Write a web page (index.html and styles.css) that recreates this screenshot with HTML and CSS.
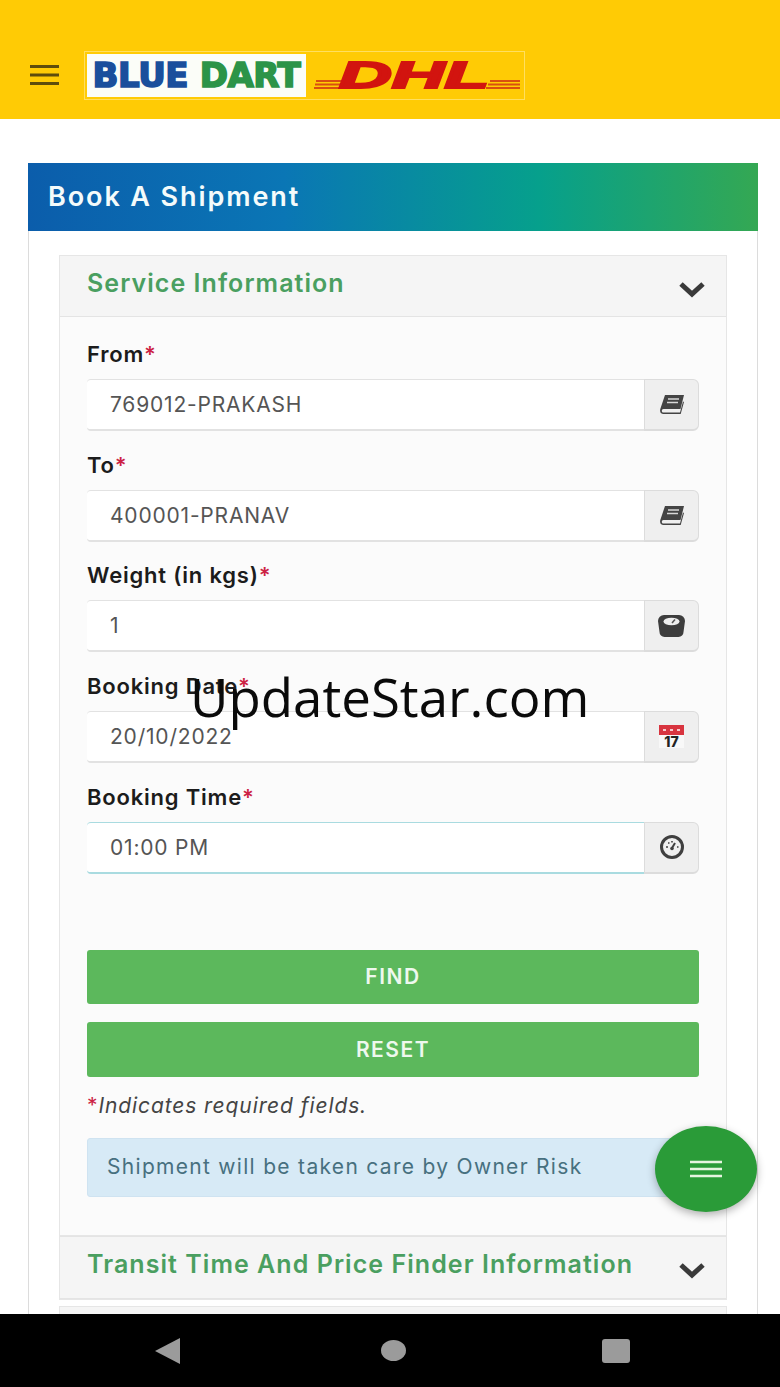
FILE: index.html
```html
<!DOCTYPE html>
<html lang="en">
<head>
<meta charset="utf-8">
<title>Book A Shipment</title>
<link rel="stylesheet" href="styles.css">
</head>
<body>
<div class="screen">
  <header class="topbar">
    <svg class="burger" width="29" height="20" viewBox="0 0 29 20"><path d="M0 1.500h29M0 10h29M0 18.500h29" stroke="#5e4c0c" stroke-width="3"/></svg>
    <div class="logo">
      <div class="logo-bd"><span class="blue">BLUE</span> <span class="dart">DART</span></div>
      <svg class="logo-dhl" width="216" height="47" viewBox="0 0 216 47">
        <g fill="#d9500f">
          <rect x="10" y="28" width="27" height="2"/><rect x="9" y="31.500" width="26" height="2"/><rect x="8" y="35" width="25" height="2"/>
          <rect x="184" y="28" width="30" height="2"/><rect x="182" y="31.500" width="32" height="2"/><rect x="180" y="35" width="34" height="2"/>
        </g>
        <text class="dhl-text" x="33" y="36" textLength="150" lengthAdjust="spacingAndGlyphs">DHL</text>
      </svg>
    </div>
  </header>

  <main class="content">
    <section class="card">
      <h1 class="card-title">Book A Shipment</h1>
      <div class="card-body">
        <section class="panel">
          <div class="panel-head">
            <h2>Service Information</h2>
            <svg class="chev" width="28" height="17" viewBox="0 0 28 17"><path d="M3 3l11 10L25 3" fill="none" stroke="#3a3a3a" stroke-width="5"/></svg>
          </div>
          <div class="panel-body">
            <div class="fields">
              <div class="field">
                <label>From<em>*</em></label>
                <div class="group">
                  <div class="input">769012-PRAKASH</div>
                  <div class="addon"><svg width="24" height="19" viewBox="0 0 24 19"><path d="M5 0h19l-3.500 14H3.500C1.500 14 1 17.500 3.500 17.500H20l3-11 1 .5-3.300 12H3C.5 19-.4 16.500.3 14z" fill="#444"/><path d="M8 4h11M7 7.500h11" stroke="#d8d8d8" stroke-width="1.600"/></svg></div>
                </div>
              </div>
              <div class="field">
                <label>To<em>*</em></label>
                <div class="group">
                  <div class="input">400001-PRANAV</div>
                  <div class="addon"><svg width="24" height="19" viewBox="0 0 24 19"><path d="M5 0h19l-3.500 14H3.500C1.500 14 1 17.500 3.500 17.500H20l3-11 1 .5-3.300 12H3C.5 19-.4 16.500.3 14z" fill="#444"/><path d="M8 4h11M7 7.500h11" stroke="#d8d8d8" stroke-width="1.600"/></svg></div>
                </div>
              </div>
              <div class="field">
                <label>Weight (in kgs)<em>*</em></label>
                <div class="group">
                  <div class="input">1</div>
                  <div class="addon"><svg width="27" height="22" viewBox="0 0 27 22"><path d="M6 0h15a6 6 0 0 1 6 6l-1.500 11a5 5 0 0 1-5 5H6.500a5 5 0 0 1-5-5L0 6a6 6 0 0 1 6-6z" fill="#3d3d3d"/><ellipse cx="13.500" cy="6.500" rx="8" ry="3.800" fill="#eee"/><path d="M14 8l3-3.500" stroke="#555" stroke-width="1.500"/></svg></div>
                </div>
              </div>
              <div class="field">
                <label>Booking Date<em>*</em></label>
                <div class="group">
                  <div class="input">20/10/2022</div>
                  <div class="addon"><div class="cal"><div class="cal-top"></div><div class="cal-day">17</div></div></div>
                </div>
              </div>
              <div class="field">
                <label>Booking Time<em>*</em></label>
                <div class="group focus">
                  <div class="input">01:00 PM</div>
                  <div class="addon"><svg width="26" height="26" viewBox="0 0 26 26"><circle cx="13" cy="13" r="10.500" fill="none" stroke="#3f3f3f" stroke-width="3"/><path d="M13 14l3-5" stroke="#3f3f3f" stroke-width="2"/><circle cx="13" cy="14.500" r="1.800" fill="#3f3f3f"/><path d="M7 13h2M9 9h1.500M13 7v1.500M18 13h1.500" stroke="#3f3f3f" stroke-width="1.600"/></svg></div>
                </div>
              </div>
            </div>
            <button class="btn btn-find" type="button">FIND</button>
            <button class="btn btn-reset" type="button">RESET</button>
            <p class="note"><em>*</em>Indicates required fields.</p>
            <div class="alert">Shipment will be taken care by Owner Risk</div>
          </div>
        </section>
        <section class="panel panel-second">
          <div class="panel-head">
            <h2>Transit Time And Price Finder Information</h2>
            <svg class="chev" width="28" height="17" viewBox="0 0 28 17"><path d="M3 3l11 10L25 3" fill="none" stroke="#3a3a3a" stroke-width="5"/></svg>
          </div>
        </section>
        <section class="panel panel-third"></section>
      </div>
    </section>
  </main>

  <nav class="navbar">
    <svg width="26" height="26" viewBox="0 0 26 26"><path d="M0 13L25 0v26z" fill="#9b9b9b"/></svg>
    <span class="nav-circle"></span>
    <span class="nav-square"></span>
  </nav>

  <button class="fab" type="button" aria-label="Menu">
    <svg width="32" height="18" viewBox="0 0 32 18"><path d="M0 2h32M0 9h32M0 16h32" stroke="#e6f5e0" stroke-width="2.600"/></svg>
  </button>
  <div class="watermark">UpdateStar.com</div>
</div>
</body>
</html>
```
FILE: styles.css
```css
* { box-sizing: border-box; }
html, body { margin: 0; padding: 0; }
body { background: #fff; font-family: Inter, Roboto, "Liberation Sans", sans-serif; }
.screen { position: relative; width: 780px; height: 1387px; display: flex; flex-direction: column; overflow: hidden; }

.topbar { height: 119px; flex: none; background: #ffcb05; padding: 32px 0 0 30px; display: flex; align-items: center; gap: 25px; }
.burger { flex: none; margin-top: -2px; }
.logo { width: 441px; height: 49px; border: 1px solid #ffdf60; padding: 2px 0 2px 2px; display: flex; align-items: stretch; }
.logo-bd { width: 219px; flex: none; background: #fbfdf8; font-family: "DejaVu Sans", sans-serif; font-weight: 700; font-size: 34px; line-height: 43px; text-align: center; white-space: nowrap; letter-spacing: -.4px; -webkit-text-stroke: 1.700px currentColor; }
.blue { color: #1a4f9c; }
.dart { color: #2c9448; }
.logo-dhl { flex: none; margin-top: -2px; }
.dhl-text { font-family: "Liberation Sans", sans-serif; font-weight: 700; font-style: italic; font-size: 36px; fill: #d2140f; stroke: #d2140f; stroke-width: 2px; }

.content { flex: 1; min-height: 0; overflow: hidden; padding: 44px 22px 0 28px; }
.card { border: 1px solid #dcdcdc; border-top: 0; height: 1200px; }
.card-title { margin: 0 -1px; height: 68px; padding-left: 20px; background: linear-gradient(90deg, #0b5dab 0%, #0a76b5 35%, #06a08c 70%, #34a853 100%); color: #f4fbfb; font-size: 27px; font-weight: 600; line-height: 68px; letter-spacing: 1.900px; }
.card-body { padding: 24px 30px 0; }

.panel { border: 1px solid #e6e6e6; background: #fbfbfb; }
.panel-head { height: 61px; background: #f5f5f5; border-bottom: 1px solid #e4e4e4; padding: 0 20px 6px 27px; display: flex; align-items: center; justify-content: space-between; }
.panel-head h2 { margin: 0; color: #4a9f60; font-size: 25px; font-weight: 600; letter-spacing: 1.050px; white-space: nowrap; }
.chev { margin-top: 12px; flex: none; }
.panel-body { padding: 24px 27px 38px; }

.fields { display: flex; flex-direction: column; gap: 20.700px; }
.field label { display: block; height: 26px; margin-bottom: 12px; color: #1c1c1c; font-size: 22px; font-weight: 600; line-height: 26px; letter-spacing: .8px; }
.field em, .note em { color: #cc2244; font-style: normal; }
.group { display: flex; height: 52px; }
.input { flex: 1; background: #fff; border: 1px solid #e2e2e2; border-width: 1px 0 2px 0; border-radius: 4px 0 0 4px; padding-left: 23px; color: #555; font-size: 21px; line-height: 49px; letter-spacing: .8px; }
.addon { width: 55px; background: #efefef; border: 1px solid #dcdcdc; border-width: 1px 1px 2px 1px; border-radius: 0 6px 6px 0; display: flex; align-items: center; justify-content: center; }
.focus .input { border-color: #a9dbe0; }
.cal { width: 25px; }
.cal-top { height: 10px; background: radial-gradient(circle, #f6c9cc 1.200px, transparent 1.500px) 2px 0 / 7px 10px repeat-x, #d8343f; }
.cal-day { height: 13px; background: #f8f8f8; color: #222; font-size: 14px; font-weight: 800; line-height: 13px; text-align: center; }

.btn { display: block; width: 100%; border: 0; border-radius: 3px; background: #5cb85c; color: #eef8ee; font-family: inherit; font-size: 21px; font-weight: 600; letter-spacing: 1.500px; }
.btn-find { height: 54px; margin-top: 76px; }
.btn-reset { height: 55px; margin-top: 18px; }
.note { margin: 17px 0 0; height: 24px; color: #444; font-size: 21px; font-style: italic; line-height: 24px; letter-spacing: .9px; }
.alert { height: 59px; margin-top: 20px; background: #d7eaf6; border: 1px solid #cfe3f1; border-radius: 3px; padding-left: 19px; color: #47707f; font-size: 21px; line-height: 55px; letter-spacing: 1.300px; }

.panel-second { border-top: 0; }
.panel-second .panel-head { height: 63px; border-top: 1px solid #e4e4e4; }
.panel-third { margin-top: 6px; height: 60px; background: #f5f5f5; }

.navbar { height: 73px; flex: none; background: #000; display: flex; align-items: center; padding: 0 150px 0 155px; justify-content: space-between; position: relative; z-index: 1; }
.nav-circle { width: 25px; height: 21px; margin-left: 4px; border-radius: 50%; background: #9b9b9b; }
.nav-square { width: 28px; height: 24px; border-radius: 3px; background: #9b9b9b; }

.fab { position: absolute; left: 655px; top: 1126px; width: 102px; height: 86px; border: 0; border-radius: 50%; background: #2a9b38; box-shadow: 0 3px 8px rgba(0,0,0,.3); padding: 0; display: flex; align-items: center; justify-content: center; z-index: 2; }
.watermark { position: absolute; left: 190px; top: 663px; color: #0a0a0a; font-family: "Open Sans", sans-serif; font-size: 52.800px; line-height: 68px; white-space: nowrap; z-index: 3; }
```
